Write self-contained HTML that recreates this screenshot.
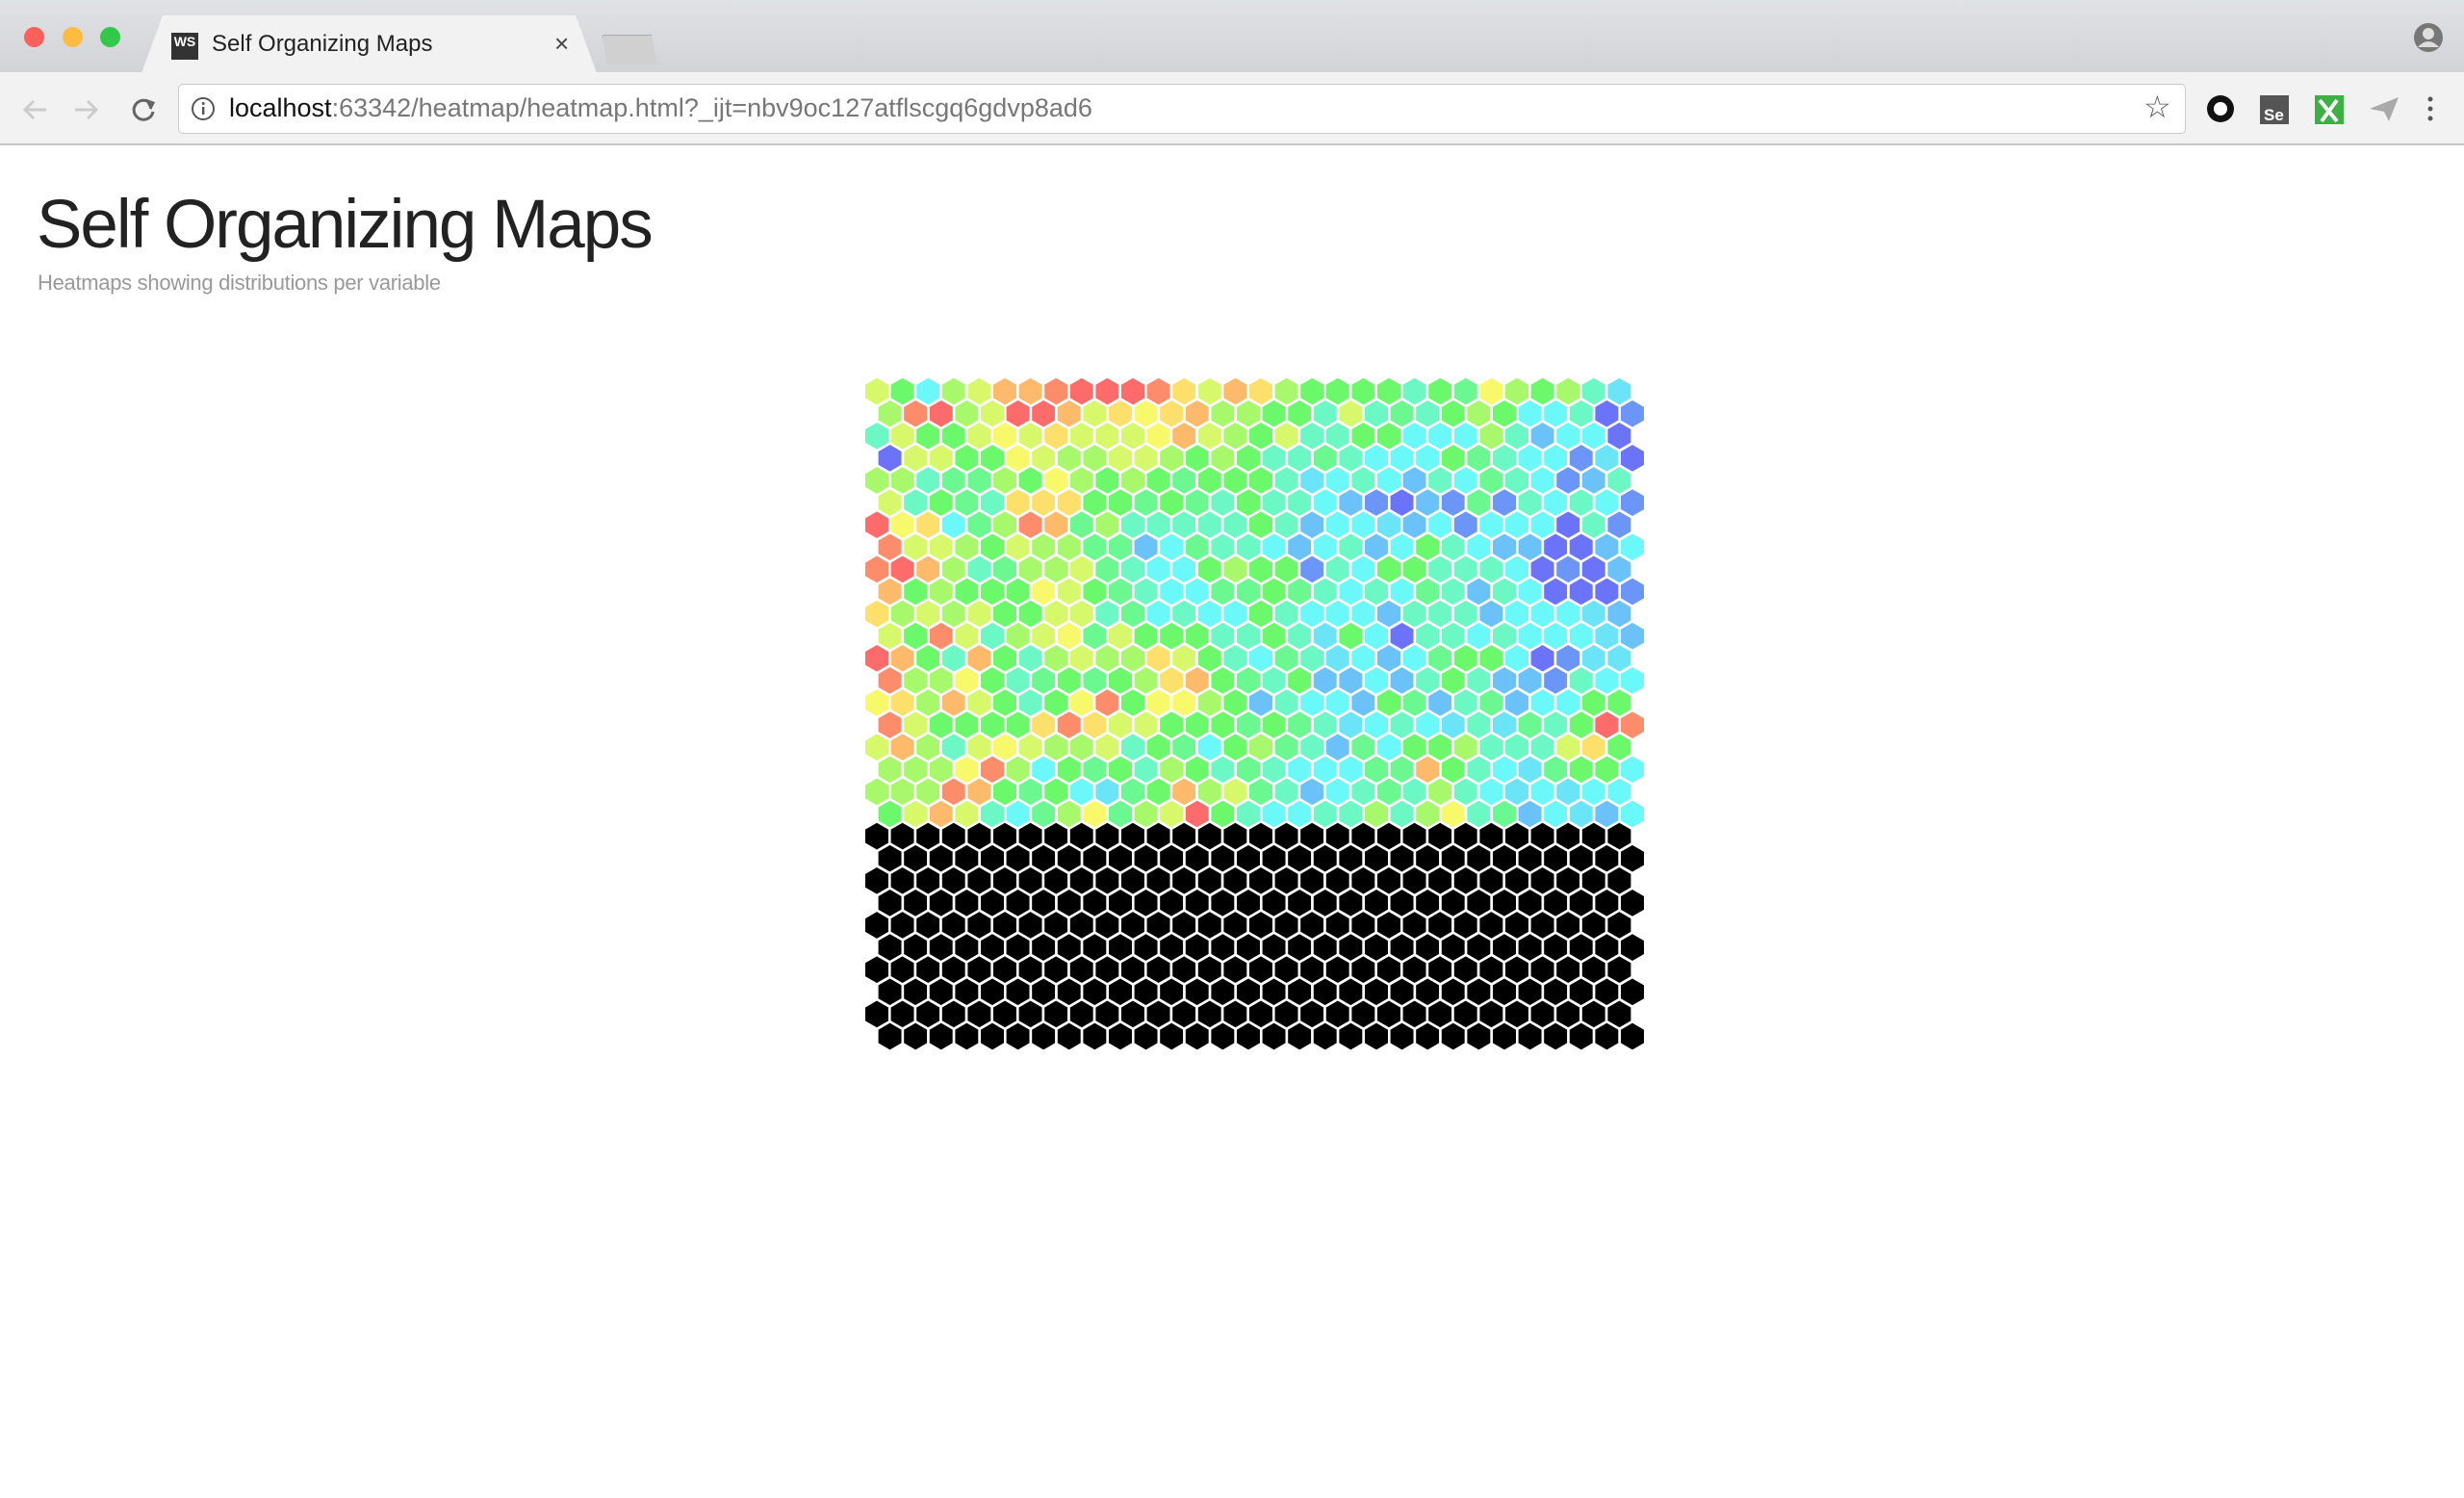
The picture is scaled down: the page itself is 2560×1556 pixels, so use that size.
<!DOCTYPE html>
<html><head><meta charset="utf-8"><style>
body{margin:0;width:2560px;height:1556px;background:#fff;font-family:"Liberation Sans",sans-serif;overflow:hidden;position:relative}
.tb{position:absolute;left:0;top:0;width:2560px;height:75px;background:linear-gradient(#e1e2e5,#d2d3d7)}
.tl{position:absolute;top:28px;width:21px;height:21px;border-radius:50%}
.tab{position:absolute;left:147px;top:16px;width:473px;height:60px;background:#f2f2f2;clip-path:polygon(22px 0,451px 0,473px 60px,0 60px)}
.tool{position:absolute;left:0;top:75px;width:2560px;height:74px;background:#f2f2f2;border-bottom:2px solid #c8c8c8}
.omni{position:absolute;left:185px;top:87px;width:2084px;height:50px;background:#fff;border:1px solid #c9c9c9;border-radius:5px}
</style></head><body>
<div class="tb"></div>
<div class="tl" style="left:25px;background:#fc605b"></div>
<div class="tl" style="left:65px;background:#fdbc40"></div>
<div class="tl" style="left:104px;background:#34c84a"></div>
<div class="tab"></div>
<div style="position:absolute;left:178px;top:34px;width:28px;height:28px;background:#333;color:#fff;font-size:14px;font-weight:bold;line-height:18px;text-align:center">WS</div>
<div style="position:absolute;left:220px;top:32px;font-size:24px;color:#222">Self Organizing Maps</div>
<div style="position:absolute;left:576px;top:30px;font-size:26px;color:#444">×</div>
<div style="position:absolute;left:625px;top:36px;width:58px;height:31px;background:#d0d0d0;border:1px solid #aaa;clip-path:polygon(0 0,52px 0,58px 31px,6px 31px);border-radius:3px"></div>
<svg style="position:absolute;left:2507px;top:23px" width="32" height="32"><circle cx="16" cy="16" r="15" fill="#777"/><circle cx="16" cy="12" r="6" fill="#ddd"/><path d="M5 26 Q16 14 27 26" fill="#ddd"/></svg>
<div class="tool"></div>
<svg style="position:absolute;left:20px;top:98px" width="150" height="32" fill="none" stroke-width="3">
<path d="M28 16H6M15 7L6 16L15 25" stroke="#ccc"/><path d="M58 16H80M71 7L80 16L71 25" stroke="#ccc"/>
<path d="M137 10A10 10 0 1 0 139 18" stroke="#666"/><path d="M131 6L139 9L136 15" stroke="#666" fill="#666"/></svg>
<div class="omni"></div>
<svg style="position:absolute;left:198px;top:100px" width="26" height="26"><circle cx="13" cy="13" r="11" fill="none" stroke="#555" stroke-width="2"/><rect x="12" y="11" width="2.4" height="8" fill="#555"/><circle cx="13.2" cy="7.5" r="1.5" fill="#555"/></svg>
<div style="position:absolute;left:238px;top:97px;font-size:27px;color:#111">localhost<span style="color:#777">:63342/heatmap/heatmap.html?_ijt=nbv9oc127atflscgq6gdvp8ad6</span></div>
<div style="position:absolute;left:2227px;top:92px;font-size:32px;color:#555">☆</div>
<svg style="position:absolute;left:2290px;top:96px" width="250" height="34">
<circle cx="17" cy="17" r="14" fill="#111"/><circle cx="17" cy="17" r="7" fill="#fff"/>
<rect x="58" y="3" width="30" height="30" fill="#555"/><text x="62" y="29" font-family="Liberation Sans" font-size="17" font-weight="bold" fill="#fff">Se</text>
<rect x="115" y="3" width="30" height="30" fill="#3cb043"/><path d="M120 8L138 30M138 8L122 30" stroke="#fff" stroke-width="4"/>
<path d="M172 17L202 5L192 30L187 20Z" fill="#aaa"/>
<circle cx="235" cy="7" r="2.5" fill="#555"/><circle cx="235" cy="17" r="2.5" fill="#555"/><circle cx="235" cy="27" r="2.5" fill="#555"/></svg>
<div style="position:absolute;left:38px;top:193px;font-size:71px;color:#222;letter-spacing:-2px">Self Organizing Maps</div>
<div style="position:absolute;left:39px;top:281px;font-size:22px;color:#999;letter-spacing:-0.3px">Heatmaps showing distributions per variable</div>
<svg id="g" style="position:absolute;left:0;top:0" width="2560" height="1556"></svg>
<script>
var rows=["lGCLlooORRROyloyLGGGGMGgYLGLMc","LORLlRRolyYyoLLGGMlMgMGLGCCMVB","MlGGlYlylllYolLGlMMGGCCCLMSCCV","VllGGYlLLllLGLGMMgMCCCGgMCCBcV","LLMggLGYLGLGgGGGMcCMCSMCgMCBSM","lMGgMyyyGGgGgMGMMCSBVSBgBMCMCB","RYyCgLOogLMMMMMGMSCCcSCBCCCVMB","OllLGlLLggSCgMMCSCMSCGMCSSVVSC","ORoLMgLLlgMCCGLGGBMCGGMMMCVBVS","oGLGGGYlGgMCCggGgMCMCgMSMCVVVB","yLlLlGGllMgCMCCGMCCCSMMMSCCCcS","lGOlMLlYglGGGMMGMcGCVMMCMCCCcS","RoGMoGMLlLLylGMCgMcCSCgGGCVBcc","OLLYGMgGgGLyoGgMGSSCSMGMSSBMCC","YyLolGMGYOGYYLGSMCCSGgSMgSCCGG","OlGGGGyOyllGGGgGgMcCMCcMcgMGRO","loLMlYlLLlMGgCGLgMSgCGGLMMMlyG","LLLYOLCGgGMLGMgMCCCggoGMCcgGGC","LLLOoGgGCcgGoLlgMSCMgMLMCcCcCC","GlolMCgLYgLlRGMCCMMLMLYMgSCcSC"];
var P={R:"#fe6b6b",O:"#fd8c6b",o:"#fdba6b",y:"#fde06b",Y:"#f8f86b",l:"#d8f86b",L:"#a8f86b",G:"#6bf86b",g:"#6bf890",M:"#6bf8c4",C:"#6bf8f8",c:"#6be4f8",S:"#6bc2f8",B:"#6b96f8",V:"#6b74f8"};
var s="",w=26.6,hw=13.3,r=15.35;
for(var j=0;j<30;j++){var cy=406.6+j*23.1,x0=j%2?924.6:911;
for(var i=0;i<30;i++){var cx=x0+i*w,f=j<20?(P[rows[j][i]]||"#6bf8c4"):"#000";
s+='<polygon points="'+cx+','+(cy-r)+' '+(cx+hw)+','+(cy-r/2)+' '+(cx+hw)+','+(cy+r/2)+' '+cx+','+(cy+r)+' '+(cx-hw)+','+(cy+r/2)+' '+(cx-hw)+','+(cy-r/2)+'" fill="'+f+'" stroke="#fff" stroke-width="2.6"/>';}}
document.getElementById("g").innerHTML=s;
</script>
</body></html>
